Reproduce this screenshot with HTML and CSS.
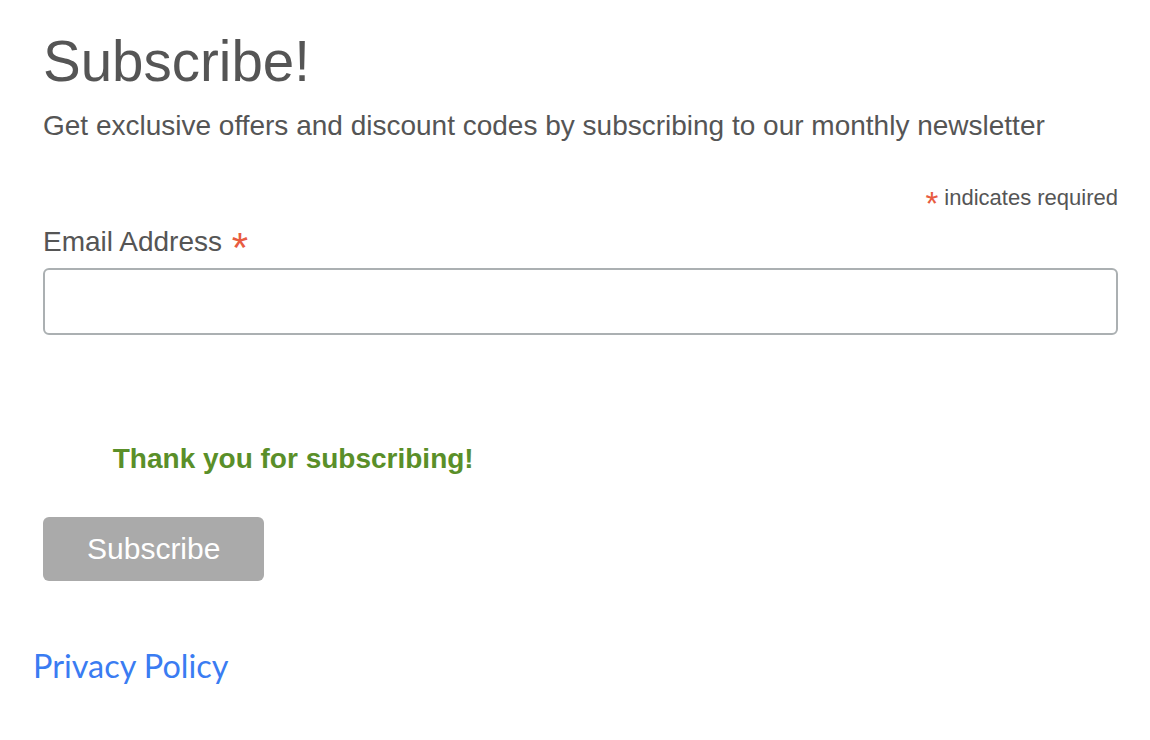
FILE: index.html
```html
<!DOCTYPE html>
<html lang="en">
<head>
<meta charset="utf-8">
<title>Subscribe!</title>
<link rel="stylesheet" href="styles.css">
</head>
<body>
<div class="signup">
  <form class="form">
    <h2 class="title">Subscribe!</h2>
    <p class="lead">Get exclusive offers and discount codes by subscribing to our monthly newsletter</p>
    <div class="required-note"><span class="asterisk">*</span> indicates required</div>
    <div class="field">
      <label class="label" for="email">Email Address <span class="asterisk">*</span></label>
      <input class="input" type="email" id="email" name="EMAIL">
    </div>
    <div class="responses">
      <div class="success">Thank you for subscribing!</div>
    </div>
    <button class="button" type="button">Subscribe</button>
  </form>
  <a class="privacy" href="#">Privacy Policy</a>
</div>
</body>
</html>
```

FILE: styles.css
```css
html, body {
  margin: 0;
  padding: 0;
  background: #ffffff;
}

.signup {
  padding-top: 30px;
}

.form {
  margin-left: 43px;
  width: 1075px;
  font-family: "Liberation Sans", Arial, sans-serif;
  color: #555555;
}

.title {
  margin: 0;
  font-size: 56.5px;
  line-height: 64px;
  font-weight: normal;
  color: #555555;
}

.lead {
  margin: 16px 0 0 0;
  font-size: 28px;
  line-height: 32px;
}

.required-note {
  margin-top: 43px;
  text-align: right;
  font-size: 22px;
  line-height: 26px;
}

.asterisk {
  color: #e85c41;
  font-size: 150%;
  line-height: 0;
  vertical-align: -10px;
}

.field {
  margin-top: 15px;
  display: flex;
  flex-direction: column;
  gap: 10px;
}

.label {
  font-size: 28px;
  line-height: 32px;
}

.label .asterisk {
  margin-left: 2px;
  vertical-align: -11px;
}

.input {
  box-sizing: border-box;
  width: 100%;
  height: 67px;
  margin: 0;
  border: 2px solid #abb0b2;
  border-radius: 6px;
  background: #ffffff;
  font-family: "Liberation Sans", Arial, sans-serif;
  font-size: 28px;
  padding: 0 2%;
  outline: none;
}

.responses {
  margin: 108px 5% 0 5%;
  padding: 0 14px 0 16px;
}

.success {
  font-size: 28px;
  line-height: 32px;
  font-weight: bold;
  color: #5a8f29;
}

.button {
  display: block;
  margin-top: 42px;
  height: 64px;
  padding: 0 44px;
  border: 0;
  border-radius: 6px;
  background: #aaaaaa;
  color: #ffffff;
  font-family: "Liberation Sans", Arial, sans-serif;
  font-size: 30px;
  line-height: 64px;
  cursor: pointer;
}

.privacy {
  display: inline-block;
  margin: 66px 0 0 33px;
  font-family: Lato, "Liberation Sans", sans-serif;
  font-size: 32.4px;
  line-height: 38px;
  color: #3a7cf2;
  text-decoration: none;
}
```
